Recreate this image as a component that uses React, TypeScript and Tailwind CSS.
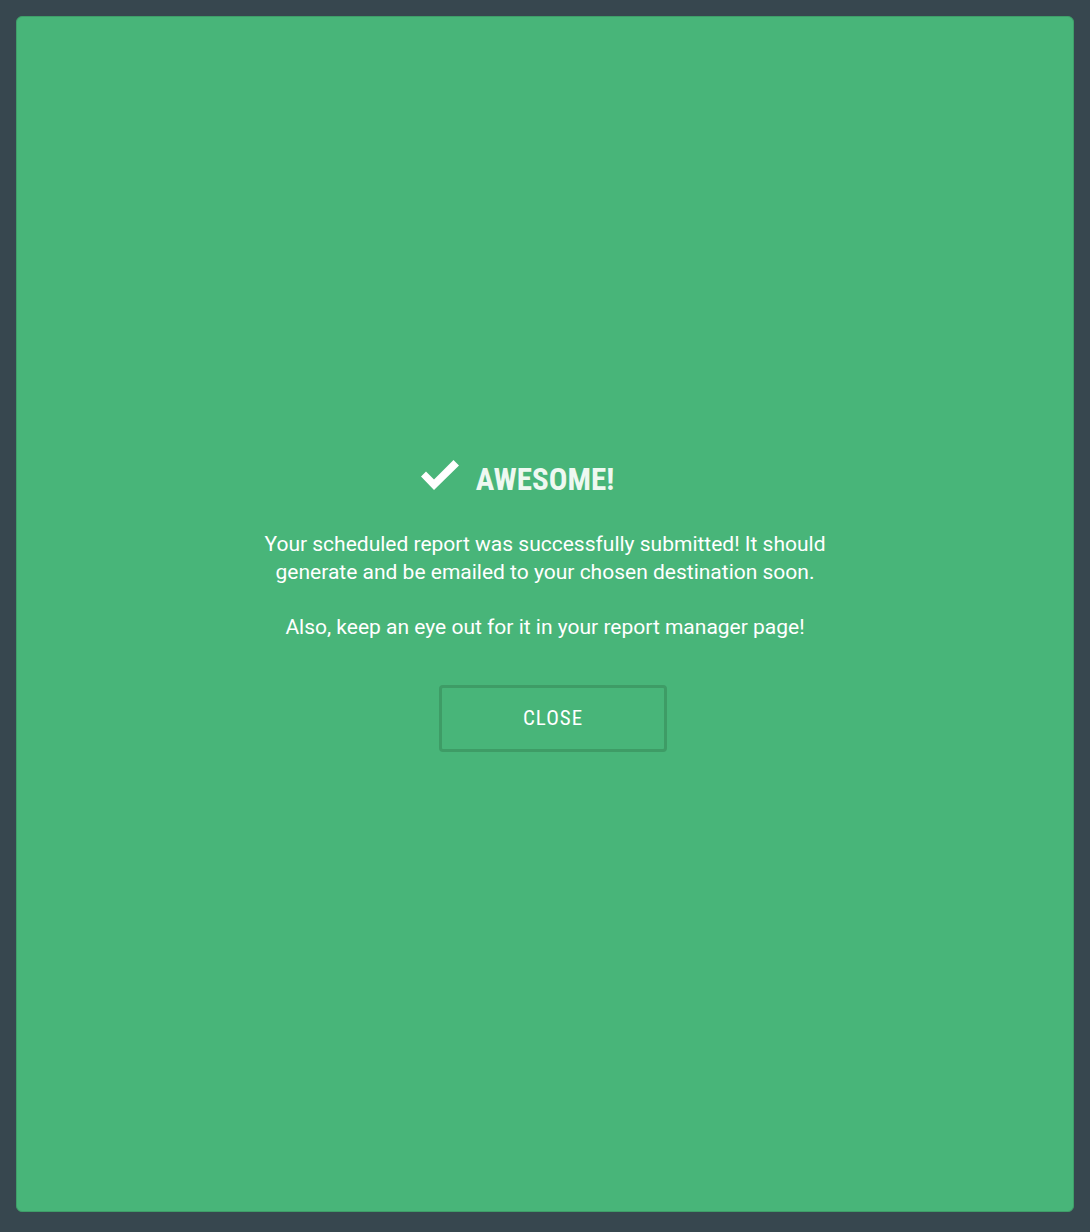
export default function App() {
  return (
    <div className="min-h-screen w-full bg-[#37474f] p-4" style={{ fontFamily: 'Roboto, "Liberation Sans", sans-serif' }}>
      <div className="flex h-[1196px] w-full flex-col items-center justify-center rounded-[6px] border border-[#3f9e69] bg-[#48b579] pb-[12px]">
        <div className="mr-[55px] flex items-start gap-[17px]">
          <svg className="-mt-1" width="38" height="30" viewBox="0 0 38 30" fill="#ffffff">
            <path d="M0 16.5 L5 11.5 L13 19.5 L32.5 0 L38 5.5 L13 30 Z" />
          </svg>
          <h1
            className="text-[31px] font-bold leading-[32px] text-[#eef8f1]"
            style={{ fontStretch: 'condensed' }}
          >
            AWESOME!
          </h1>
        </div>
        <p className="mt-[34px] text-center text-[21px] leading-[28px] text-white">
          Your scheduled report was successfully submitted! It should
          <br />
          generate and be emailed to your chosen destination soon.
        </p>
        <p className="mt-[27px] text-center text-[21px] leading-[28px] text-white">
          Also, keep an eye out for it in your report manager page!
        </p>
        <button
          className="ml-4 mt-[44px] flex h-[67px] w-[228px] items-center justify-center rounded-[4px] border-[3px] border-[#3e9c66] text-[21px] tracking-[1px] text-white"
          style={{ fontStretch: 'condensed' }}
        >
          CLOSE
        </button>
      </div>
    </div>
  );
}
